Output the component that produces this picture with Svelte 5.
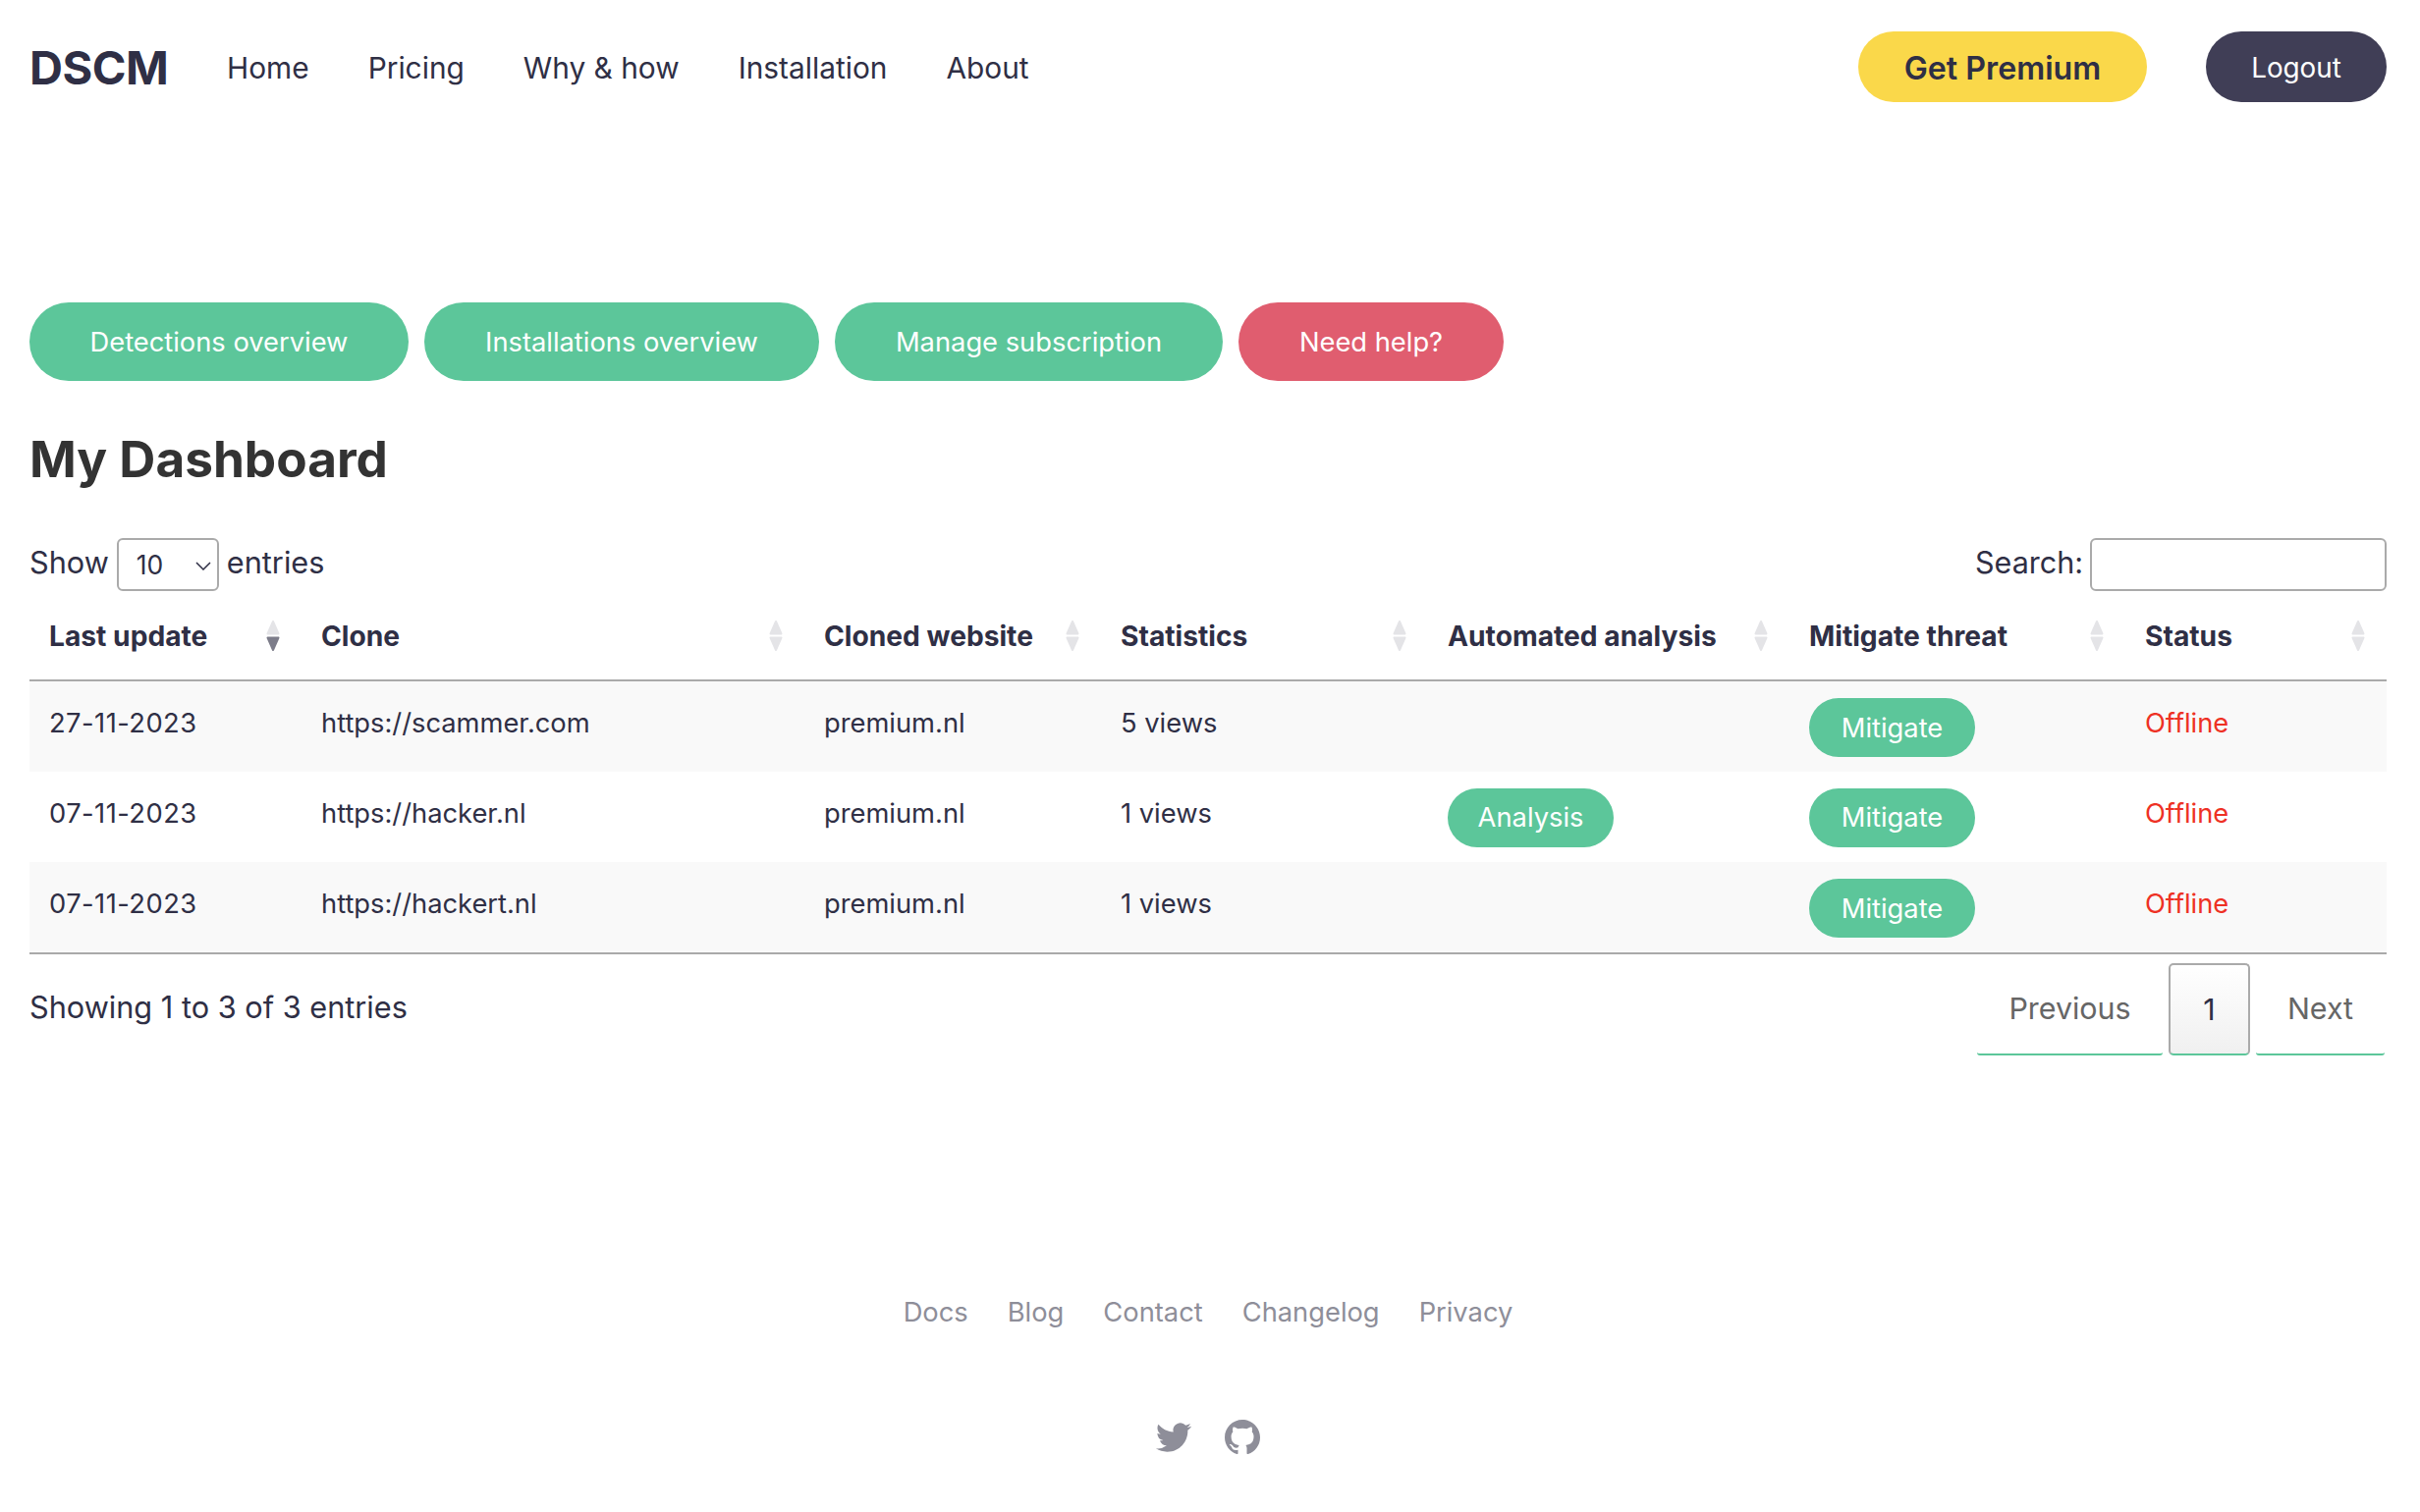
<script>
  const rows = [
    { date: '27-11-2023', clone: 'https://scammer.com', site: 'premium.nl', stats: '5 views', analysis: false },
    { date: '07-11-2023', clone: 'https://hacker.nl', site: 'premium.nl', stats: '1 views', analysis: true },
    { date: '07-11-2023', clone: 'https://hackert.nl', site: 'premium.nl', stats: '1 views', analysis: false }
  ];
  const cols = ['Last update', 'Clone', 'Cloned website', 'Statistics', 'Automated analysis', 'Mitigate threat', 'Status'];
  const widths = [277, 512, 302, 333, 368, 342, 266];
  const navs = ['Home', 'Pricing', 'Why & how', 'Installation', 'About'];
  const foot = ['Docs', 'Blog', 'Contact', 'Changelog', 'Privacy'];
</script>

<div class="page">
  <header class="nav">
    <span class="logo">DSCM</span>
    <nav class="links">
      {#each navs as n}<span>{n}</span>{/each}
    </nav>
    <div class="actions">
      <span class="pill premium">Get Premium</span>
      <span class="pill logout">Logout</span>
    </div>
  </header>

  <div class="tabs">
    <span class="tab t1">Detections overview</span>
    <span class="tab t2">Installations overview</span>
    <span class="tab t3">Manage subscription</span>
    <span class="tab help">Need help?</span>
  </div>

  <h1>My Dashboard</h1>

  <div class="controls">
    <div class="show">
      Show
      <span class="selwrap">
        <select><option>10</option></select>
        <svg class="chev" viewBox="0 0 16 9"><path d="M1 1l7 7 7-7"/></svg>
      </span>
      entries
    </div>
    <label class="search">Search: <input type="text" /></label>
  </div>

  <table>
    <colgroup>{#each widths as w}<col style="width:{w}px" />{/each}</colgroup>
    <thead>
      <tr>
        {#each cols as c, i}
          <th>
            {c}
            <svg class="sort" viewBox="0 0 14 33">
              <path class="tri" d="M7 2L12.5 14.5H1.5Z"/>
              <path class="tri" class:on={i === 0} d="M7 31L12.5 18.5H1.5Z"/>
            </svg>
          </th>
        {/each}
      </tr>
    </thead>
    <tbody>
      {#each rows as r}
        <tr>
          <td class="date">{r.date}</td>
          <td>{r.clone}</td>
          <td>{r.site}</td>
          <td>{r.stats}</td>
          <td>{#if r.analysis}<span class="mini">Analysis</span>{/if}</td>
          <td><span class="mini">Mitigate</span></td>
          <td class="off">Offline</td>
        </tr>
      {/each}
    </tbody>
  </table>

  <div class="below">
    <span>Showing 1 to 3 of 3 entries</span>
    <div class="pager">
      <span class="pg prev">Previous</span>
      <span class="pg cur">1</span>
      <span class="pg next">Next</span>
    </div>
  </div>

  <footer>
    <div class="flinks">
      {#each foot as f}<span>{f}</span>{/each}
    </div>
    <div class="social">
      <svg class="tw" viewBox="0 0 24 24"><path d="M23.953 4.57a10 10 0 01-2.825.775 4.958 4.958 0 002.163-2.723c-.951.555-2.005.959-3.127 1.184a4.92 4.92 0 00-8.384 4.482C7.69 8.095 4.067 6.13 1.64 3.162a4.822 4.822 0 00-.666 2.475c0 1.71.87 3.213 2.188 4.096a4.904 4.904 0 01-2.228-.616v.06a4.923 4.923 0 003.946 4.827 4.996 4.996 0 01-2.212.085 4.936 4.936 0 004.604 3.417 9.867 9.867 0 01-6.102 2.105c-.39 0-.779-.023-1.17-.067a13.995 13.995 0 007.557 2.209c9.053 0 13.998-7.496 13.998-13.985 0-.21 0-.42-.015-.63A9.935 9.935 0 0024 4.59z"/></svg>
      <svg class="gh" viewBox="0 0 16 16"><path d="M8 0C3.58 0 0 3.58 0 8c0 3.54 2.29 6.53 5.47 7.59.4.07.55-.17.55-.38 0-.19-.01-.82-.01-1.49-2.01.37-2.53-.49-2.69-.94-.09-.23-.48-.94-.82-1.13-.28-.15-.68-.52-.01-.53.63-.01 1.08.58 1.23.82.72 1.21 1.87.87 2.33.66.07-.52.28-.87.51-1.07-1.78-.2-3.64-.89-3.64-3.95 0-.87.31-1.59.82-2.15-.08-.2-.36-1.02.08-2.12 0 0 .67-.21 2.2.82.64-.18 1.32-.27 2-.27.68 0 1.36.09 2 .27 1.53-1.04 2.2-.82 2.2-.82.44 1.1.16 1.92.08 2.12.51.56.82 1.27.82 2.15 0 3.07-1.87 3.75-3.65 3.95.29.25.54.73.54 1.48 0 1.07-.01 1.93-.01 2.2 0 .21.15.46.55.38A8.013 8.013 0 0016 8c0-4.42-3.58-8-8-8z"/></svg>
    </div>
  </footer>
</div>

<style>
  :global(body) { margin: 0; background: #fff; }
  .page {
    box-sizing: border-box;
    width: 2464px;
    height: 1540px;
    padding: 0 34px 0 30px;
    font-family: Inter, sans-serif;
    font-size: 27.3px;
    color: #2f2f45;
    overflow: hidden;
  }
  .nav { display: flex; align-items: center; height: 136px; }
  .logo { font-size: 47px; font-weight: 700; width: 201px; letter-spacing: -0.5px; }
  .links { display: flex; gap: 60px; font-size: 29.85px; padding-top: 2px; }
  .actions { margin-left: auto; display: flex; gap: 60px; }
  .pill {
    box-sizing: border-box; padding-top: 2px;
    display: flex; align-items: center; justify-content: center;
    height: 72px; border-radius: 36px;
  }
  .premium { width: 294px; background: #fad84a; font-weight: 600; font-size: 32.2px; }
  .logout { width: 184px; background: #403e56; color: #fff; font-size: 27.8px; }

  .tabs { display: flex; gap: 16px; margin-top: 172px; }
  .tab {
    display: flex; align-items: center; justify-content: center;
    height: 80px; border-radius: 40px; background: #5cc69a; color: #fff; font-size: 27.3px;
  }
  .t1 { width: 386px; }
  .t2 { width: 402px; }
  .t3 { width: 395px; }
  .help { width: 270px; background: #e05d6f; }

  h1 { margin: 49px 0 0; font-size: 51.3px; font-weight: 700; line-height: 60px; color: #333; }

  .controls {
    display: flex; justify-content: space-between; align-items: center;
    margin-top: 51px; height: 54px; font-size: 30.7px; line-height: 50px;
  }
  .show, .search { display: flex; align-items: flex-start; gap: 8px; height: 54px; }
  .search { font-size: 30.5px; }
  .selwrap { position: relative; display: block; height: 54px; }
  select {
    display: block; box-sizing: border-box; width: 104px; height: 54px;
    appearance: none; -webkit-appearance: none;
    border: 2px solid #aaa; border-radius: 6px; background: #fff;
    font: 26.5px Inter, sans-serif; color: #2f2f45; padding-left: 18px;
  }
  .chev { position: absolute; left: 80px; top: 24px; width: 16px; height: 9px; }
  .chev path { fill: none; stroke: #2f2f45; stroke-width: 1.5; }
  input {
    box-sizing: border-box; width: 302px; height: 54px;
    border: 2px solid #aaa; border-radius: 6px; background: #fff; margin-left: -1px;
  }

  table { border-collapse: collapse; table-layout: fixed; width: 2400px; margin-top: 1px; }
  th {
    position: relative; text-align: left; font-weight: 700; font-size: 28.2px;
    height: 90px; padding: 0 20px; border-bottom: 2px solid #aaa; box-sizing: border-box;
    white-space: nowrap;
  }
  .sort { position: absolute; right: 22px; top: 28px; width: 14px; height: 33px; }
  .tri { fill: #e4e4e7; stroke: #e4e4e7; stroke-width: 2; stroke-linejoin: round; }
  .tri.on { fill: #7d7d8a; stroke: #7d7d8a; }
  td { height: 92.5px; padding: 25px 20px 0; box-sizing: border-box; vertical-align: top; line-height: 35px; }
  .date { letter-spacing: 0.47px; }
  tbody tr:nth-child(odd) { background: #f9f9f9; }
  tbody tr:last-child td { border-bottom: 2px solid #aaa; }
  .mini {
    display: inline-flex; align-items: center; justify-content: center;
    width: 169px; height: 60px; margin-top: -8px; border-radius: 30px;
    background: #5cc69a; color: #fff; font-size: 27.3px;
  }
  .off { color: #ee3124; }

  .below { display: flex; justify-content: space-between; align-items: flex-start; font-size: 30.7px; }
  .below > span { margin-top: 35px; }
  .pager { display: flex; gap: 6px; margin-top: 9px; margin-right: 2px; }
  .pg {
    display: flex; align-items: center; justify-content: center;
    box-sizing: border-box; height: 94px; color: #666; border-bottom: 2px solid #5cc69a; border-radius: 3px; font-size: 30.4px;
  }
  .prev { width: 189px; }
  .next { width: 131px; }
  .cur {
    width: 83px; color: #2f2f45;
    border: 2px solid #aaa; border-bottom: 2px solid #5cc69a; border-radius: 5px;
    background: linear-gradient(#fff, #f0f0f0);
  }

  footer { text-align: center; color: #8e8e99; }
  .flinks { display: flex; justify-content: center; gap: 40px; margin-top: 245px; }
  .social { display: flex; justify-content: center; align-items: center; gap: 34px; margin-top: 93px; }
  .social svg { fill: #8e8e99; display: block; }
  .tw { width: 36px; height: 36px; }
  .gh { width: 36px; height: 36px; }
</style>
